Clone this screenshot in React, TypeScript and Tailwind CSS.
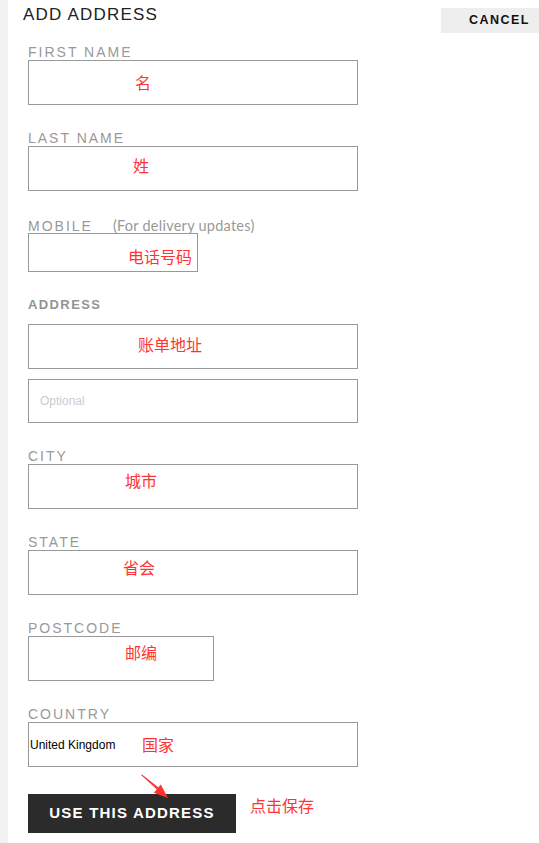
import React from "react";

const sans = { fontFamily: '"Liberation Sans", Arial, sans-serif' };
const cjk = { fontFamily: '"Noto Sans CJK SC", "Noto Sans", sans-serif' };

function Note({ text, left, top }: { text: string; left: number; top: number }) {
  return (
    <span
      className="absolute text-[16px] leading-none text-[#ff3333] whitespace-nowrap"
      style={{ ...cjk, left, top }}
    >
      {text}
    </span>
  );
}

function Label({ children, className = "" }: { children: React.ReactNode; className?: string }) {
  return (
    <div
      className={"text-[14px] leading-[15px] tracking-[2px] text-[#999999] uppercase " + className}
      style={sans}
    >
      {children}
    </div>
  );
}

function Box({
  className,
  children,
}: {
  className: string;
  children?: React.ReactNode;
}) {
  return (
    <div className={"relative border border-[#999999] bg-white " + className}>{children}</div>
  );
}

export default function App() {
  return (
    <div className="relative flex min-h-[843px] w-[539px] bg-white" style={sans}>
      <div className="w-[8px] shrink-0 bg-[#f2f2f2]" />
      <div className="flex-1 flex flex-col">
        <div className="flex justify-between items-start h-[33px]">
          <div className="mt-[5px] ml-[15px] text-[17px] leading-[20px] tracking-[1.2px] text-[#222222]">
            ADD ADDRESS
          </div>
          <button className="mt-[8px] h-[25px] w-[98px] bg-[#eeeeee] flex items-center justify-end pr-[9px] text-[12.5px] font-bold tracking-[1.5px] text-[#111111]">
            CANCEL
          </button>
        </div>

        <div className="ml-[20px] flex flex-col">
          <Label className="mt-[12px]">First Name</Label>
          <Box className="w-[330px] h-[45px]">
            <Note text="名" left={106} top={13} />
          </Box>

          <Label className="mt-[26px]">Last Name</Label>
          <Box className="w-[330px] h-[45px]">
            <Note text="姓" left={104} top={10} />
          </Box>

          <div className="mt-[27px] h-[15px] flex items-baseline leading-[15px]">
            <Label>Mobile</Label>
            <span className="ml-[20px] text-[14.5px] leading-[15px] tracking-[0.25px] text-[#999999]" style={{ fontFamily: 'Lato, "Liberation Sans", sans-serif' }}>
              (For delivery updates)
            </span>
          </div>
          <Box className="w-[170px] h-[39px]">
            <Note text="电话号码" left={99} top={14} />
          </Box>

          <div
            className="mt-[25px] mb-[12px] text-[13px] leading-[15px] font-bold tracking-[1.4px] text-[#939393]"
            style={sans}
          >
            ADDRESS
          </div>
          <Box className="w-[330px] h-[45px]">
            <Note text="账单地址" left={109} top={11} />
          </Box>
          <Box className="mt-[10px] w-[330px] h-[44px] flex items-center">
            <span className="ml-[11px] text-[12px] text-[#cccccc]" style={sans}>
              Optional
            </span>
          </Box>

          <Label className="mt-[26px]">City</Label>
          <Box className="w-[330px] h-[45px]">
            <Note text="城市" left={96} top={7} />
          </Box>

          <Label className="mt-[26px]">State</Label>
          <Box className="w-[330px] h-[45px]">
            <Note text="省会" left={94} top={8} />
          </Box>

          <Label className="mt-[26px]">Postcode</Label>
          <Box className="w-[186px] h-[45px]">
            <Note text="邮编" left={96} top={7} />
          </Box>

          <Label className="mt-[26px]">Country</Label>
          <Box className="w-[330px] h-[45px] flex items-center">
            <span className="ml-[1px] text-[12px] text-black" style={sans}>
              United Kingdom
            </span>
            <Note text="国家" left={113} top={13} />
          </Box>

          <div className="mt-[27px] flex items-start">
            <button className="w-[208px] h-[39px] bg-[#2b2b2b] text-white text-[15px] font-bold tracking-[1.2px] flex items-center justify-center">
              USE THIS ADDRESS
            </button>
            <span
              className="ml-[14px] mt-[3px] text-[16px] leading-none text-[#ff3333]"
              style={cjk}
            >
              点击保存
            </span>
          </div>
        </div>
      </div>

      <svg
        className="absolute left-0 top-0 pointer-events-none"
        width="539"
        height="843"
        viewBox="0 0 539 843"
      >
        <polygon points="141,775 142,774.4 158.5,787.6 157,789.4" fill="#ff3333" />
        <polygon points="168,798 153.8,792.8 160.8,784.6" fill="#ff3333" />
      </svg>
    </div>
  );
}
